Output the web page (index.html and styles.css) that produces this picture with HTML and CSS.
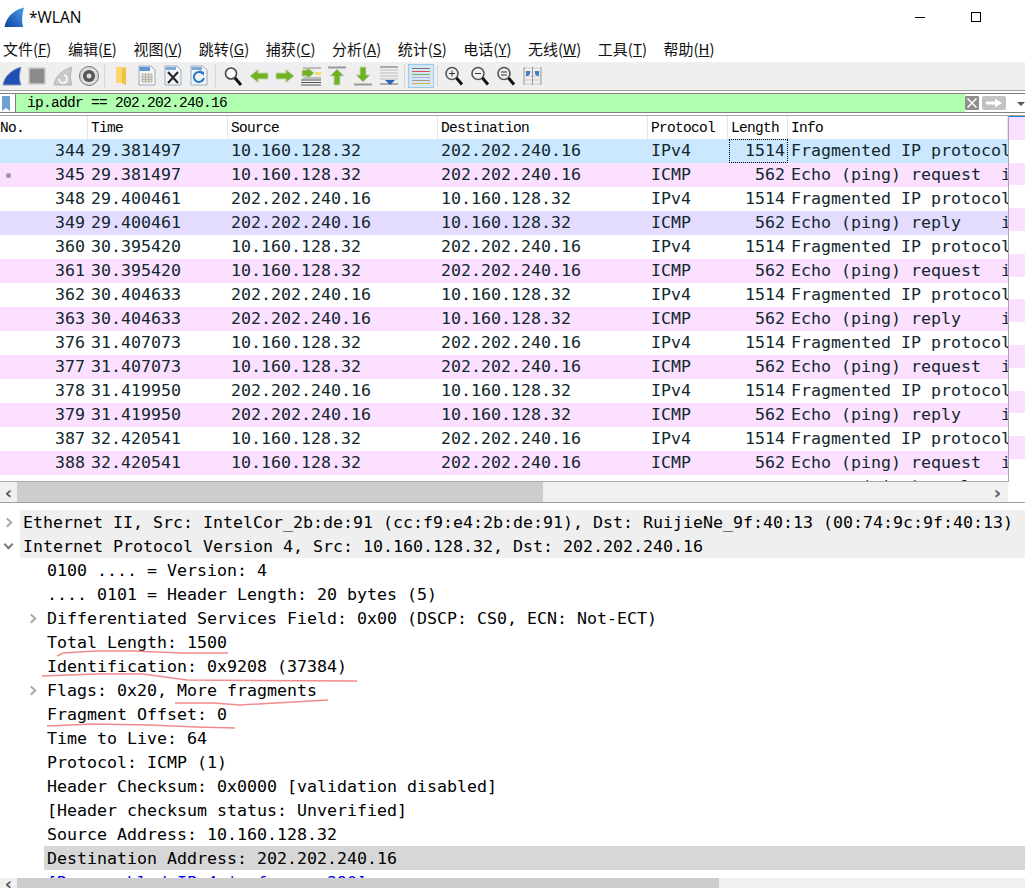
FILE: index.html
```html
<!DOCTYPE html>
<html lang="en">
<head>
    <meta charset="UTF-8">
    <title>*WLAN</title>
    <link rel="stylesheet" href="styles.css">
</head>
<body>
    <div class="titlebar">
        <svg class="app-icon" width="21" height="21" viewBox="0 0 21 21">
            <defs>
                <linearGradient id="fin" x1="0" y1="1" x2="1" y2="0">
                    <stop offset="0" stop-color="#0f3f9e"/>
                    <stop offset="1" stop-color="#4aa0ee"/>
                </linearGradient>
            </defs>
            <path d="M0.500 20C2 11 9 3 20 0.500C18 8 17.500 14 19 20Z" fill="url(#fin)"/>
        </svg>
        <span class="title">*WLAN</span>
        <div class="win-controls">
            <span class="win-min"></span>
            <span class="win-max"></span>
        </div>
    </div>

    <div class="menubar">
        <span>文件(<u>F</u>)</span>
        <span>编辑(<u>E</u>)</span>
        <span>视图(<u>V</u>)</span>
        <span>跳转(<u>G</u>)</span>
        <span>捕获(<u>C</u>)</span>
        <span>分析(<u>A</u>)</span>
        <span>统计(<u>S</u>)</span>
        <span>电话(<u>Y</u>)</span>
        <span>无线(<u>W</u>)</span>
        <span>工具(<u>T</u>)</span>
        <span>帮助(<u>H</u>)</span>
    </div>

    <div class="toolbar">
        <span class="tool first"><svg viewBox="0 0 22 22"><path d="M2 20C3 12 10 5 20 2C18 9 18 15 20 20Z" fill="#1d4fb4" stroke="#8a97b5"/></svg></span>
        <span class="tool"><svg viewBox="0 0 22 22"><rect x="3" y="3" width="16" height="16" fill="#8b8b8b" stroke="#cfcfcf" stroke-width="1.500"/></svg></span>
        <span class="tool"><svg viewBox="0 0 22 22"><path d="M2 20C3 12 10 5 20 2C18 9 18 15 20 20Z" fill="#c9c9c9" stroke="#b5b5b5"/><path d="M7 14a4 4 0 1 0 5-4" fill="none" stroke="#f4f4f4" stroke-width="2"/></svg></span>
        <span class="tool"><svg viewBox="0 0 22 22"><circle cx="11" cy="11" r="9.500" fill="#dcdcdc" stroke="#777"/><circle cx="11" cy="11" r="6" fill="#555"/><circle cx="11" cy="11" r="2.500" fill="#ddd"/></svg></span>
        <span class="sep"></span>
        <span class="tool"><svg viewBox="0 0 22 22"><path d="M6 2H16V20L12 18H6Z" fill="#fbd76e"/><path d="M12 3H16V20L12 18Z" fill="#f3c141"/></svg></span>
        <span class="tool"><svg viewBox="0 0 22 22"><path d="M3 1H15L19 5V20H3Z" fill="#f5f5f5" stroke="#9aa9bd"/><path d="M3.500 2H14V6H3.500Z" fill="#5b95d6"/><path d="M6 9H16V17H6ZM6 12H16M6 14.500H16M9.500 9V17M12.500 9V17" fill="#e3dfcf" stroke="#a5a296" stroke-width=".7"/></svg></span>
        <span class="tool"><svg viewBox="0 0 22 22"><path d="M3 1H15L19 5V20H3Z" fill="#f3f5f8" stroke="#9aa9bd"/><path d="M3.500 2H14V5H3.500Z" fill="#7fa9d8"/><path d="M6 7L16 18M16 7L6 18" stroke="#222" stroke-width="2"/></svg></span>
        <span class="tool"><svg viewBox="0 0 22 22"><path d="M3 1H15L19 5V20H3Z" fill="#f3f5f8" stroke="#9aa9bd"/><path d="M3.500 2H14V5H3.500Z" fill="#7fa9d8"/><path d="M14.500 8.500A5 5 0 1 0 15.800 13" fill="none" stroke="#2a78c8" stroke-width="2"/><path d="M11 5L16 7V11Z" fill="#2a78c8"/></svg></span>
        <span class="sep wide"></span>
        <span class="tool"><svg viewBox="0 0 22 22"><circle cx="9" cy="8.500" r="5.500" fill="#fff" stroke="#444" stroke-width="1.600"/><path d="M13 13L19 20" stroke="#111" stroke-width="3"/></svg></span>
        <span class="tool"><svg viewBox="0 0 22 22"><path d="M2 11L10 4.500V8H20V14H10V17.500Z" fill="#6fb320" stroke="#c6cfb8"/></svg></span>
        <span class="tool"><svg viewBox="0 0 22 22"><path d="M20 11L12 4.500V8H2V14H12V17.500Z" fill="#6fb320" stroke="#c6cfb8"/></svg></span>
        <span class="tool"><svg viewBox="0 0 22 22"><path d="M1 15H21M1 17.500H21M1 20H21" stroke="#555"/><path d="M15 7H21V10H15Z" fill="#f2df6b"/><path d="M3 3H21M3 13H21" stroke="#888"/><path d="M14 8L7 2V5H2V11H7V14Z" fill="#6fb320" stroke="#c6cfb8"/></svg></span>
        <span class="tool"><svg viewBox="0 0 22 22"><path d="M2 2.500H20" stroke="#999" stroke-width="2"/><path d="M11 4L18 11H14V20H8V11H4Z" fill="#6fb320" stroke="#c6cfb8"/></svg></span>
        <span class="tool"><svg viewBox="0 0 22 22"><path d="M2 19.500H20" stroke="#999" stroke-width="2"/><path d="M11 17L18 10H14V2H8V10H4Z" fill="#6fb320" stroke="#c6cfb8"/></svg></span>
        <span class="tool"><svg viewBox="0 0 22 22"><path d="M2 2H20" stroke="#666"/><path d="M2 5H20M2 8H20M2 11H20M2 14H20" stroke="#bbb"/><path d="M2 19H20" stroke="#666"/><path d="M7 15H17L12 20Z" fill="#2b63b5"/></svg></span>
        <span class="sep"></span>
        <span class="tool active"><svg viewBox="0 0 22 22"><path d="M2 3.500H20" stroke="#777"/><path d="M2 6.500H20" stroke="#d9534f"/><path d="M2 9.500H20" stroke="#6fb74f"/><path d="M2 12.500H20" stroke="#b8a9d6"/><path d="M2 15.500H20" stroke="#a89a8a"/><path d="M2 18.500H20" stroke="#d6b24f"/></svg></span>
        <span class="sep narrow"></span>
        <span class="tool"><svg viewBox="0 0 22 22"><circle cx="9" cy="8.500" r="6" fill="#f1f1f1" stroke="#555" stroke-width="1.600"/><path d="M6 8.500H12M9 5.500V11.500" stroke="#333"/><path d="M13.500 13L19 19.500" stroke="#111" stroke-width="3"/></svg></span>
        <span class="tool"><svg viewBox="0 0 22 22"><circle cx="9" cy="8.500" r="6" fill="#f1f1f1" stroke="#555" stroke-width="1.600"/><path d="M6 8.500H12" stroke="#333"/><path d="M13.500 13L19 19.500" stroke="#111" stroke-width="3"/></svg></span>
        <span class="tool"><svg viewBox="0 0 22 22"><circle cx="9" cy="8.500" r="6" fill="#f1f1f1" stroke="#555" stroke-width="1.600"/><path d="M6 7H12M6 10H12" stroke="#333"/><path d="M13.500 13L19 19.500" stroke="#111" stroke-width="3"/></svg></span>
        <span class="tool"><svg viewBox="0 0 22 22"><path d="M3 3H20M3 7H20M3 11H20M3 15H20M3 19H20" stroke="#ccc"/><path d="M3 2V20M11.500 2V20M20 2V20" stroke="#999"/><path d="M5 6H9V9L7 11H5ZM14 6H18V11H16L14 9Z" fill="#3f7fc2"/></svg></span>
    </div>

    <div class="filterbar">
        <span class="bookmark"><svg width="8" height="15" viewBox="0 0 8 15"><path d="M0 0H8V15L4 12L0 15Z" fill="#6f9fd4"/></svg></span>
        <span class="filter-text">ip.addr == 202.202.240.16</span>
        <span class="filter-clear"><svg width="14" height="14" viewBox="0 0 14 14"><rect width="14" height="14" rx="1" fill="#8e8e8e"/><path d="M2.500 2.500L11.500 11.500M11.500 2.500L2.500 11.500" stroke="#fff" stroke-width="1.500"/></svg></span>
        <span class="filter-apply"><svg width="24" height="14" viewBox="0 0 24 14"><rect width="24" height="14" rx="2" fill="#c2c2c2"/><path d="M4 5.500H13V2.500L20 7L13 11.500V8.500H4Z" fill="#fff"/></svg></span>
        <span class="filter-drop"></span>
    </div>

    <div class="packets">
        <div class="packet-table">
            <div class="row head">
                <span>No.</span><span>Time</span><span>Source</span><span>Destination</span><span>Protocol</span><span>Length</span><span>Info</span>
            </div>
            <div class="row selected"><span class="no">344</span><span>29.381497</span><span>10.160.128.32</span><span>202.202.240.16</span><span>IPv4</span><span class="len focus">1514</span><span>Fragmented IP protocol (proto=ICMP 1, off=0, ID=9208)</span></div>
            <div class="row icmp"><span class="no"><i class="dot"></i>345</span><span>29.381497</span><span>10.160.128.32</span><span>202.202.240.16</span><span>ICMP</span><span class="len">562</span><span>Echo (ping) request  id=0x0001, seq=1/256, ttl=64</span></div>
            <div class="row"><span class="no">348</span><span>29.400461</span><span>202.202.240.16</span><span>10.160.128.32</span><span>IPv4</span><span class="len">1514</span><span>Fragmented IP protocol (proto=ICMP 1, off=0, ID=3c8d)</span></div>
            <div class="row related"><span class="no">349</span><span>29.400461</span><span>202.202.240.16</span><span>10.160.128.32</span><span>ICMP</span><span class="len">562</span><span>Echo (ping) reply    id=0x0001, seq=1/256, ttl=52</span></div>
            <div class="row"><span class="no">360</span><span>30.395420</span><span>10.160.128.32</span><span>202.202.240.16</span><span>IPv4</span><span class="len">1514</span><span>Fragmented IP protocol (proto=ICMP 1, off=0, ID=9209)</span></div>
            <div class="row icmp"><span class="no">361</span><span>30.395420</span><span>10.160.128.32</span><span>202.202.240.16</span><span>ICMP</span><span class="len">562</span><span>Echo (ping) request  id=0x0001, seq=2/512, ttl=64</span></div>
            <div class="row"><span class="no">362</span><span>30.404633</span><span>202.202.240.16</span><span>10.160.128.32</span><span>IPv4</span><span class="len">1514</span><span>Fragmented IP protocol (proto=ICMP 1, off=0, ID=3c8e)</span></div>
            <div class="row icmp"><span class="no">363</span><span>30.404633</span><span>202.202.240.16</span><span>10.160.128.32</span><span>ICMP</span><span class="len">562</span><span>Echo (ping) reply    id=0x0001, seq=2/512, ttl=52</span></div>
            <div class="row"><span class="no">376</span><span>31.407073</span><span>10.160.128.32</span><span>202.202.240.16</span><span>IPv4</span><span class="len">1514</span><span>Fragmented IP protocol (proto=ICMP 1, off=0, ID=920a)</span></div>
            <div class="row icmp"><span class="no">377</span><span>31.407073</span><span>10.160.128.32</span><span>202.202.240.16</span><span>ICMP</span><span class="len">562</span><span>Echo (ping) request  id=0x0001, seq=3/768, ttl=64</span></div>
            <div class="row"><span class="no">378</span><span>31.419950</span><span>202.202.240.16</span><span>10.160.128.32</span><span>IPv4</span><span class="len">1514</span><span>Fragmented IP protocol (proto=ICMP 1, off=0, ID=3c8f)</span></div>
            <div class="row icmp"><span class="no">379</span><span>31.419950</span><span>202.202.240.16</span><span>10.160.128.32</span><span>ICMP</span><span class="len">562</span><span>Echo (ping) reply    id=0x0001, seq=3/768, ttl=52</span></div>
            <div class="row"><span class="no">387</span><span>32.420541</span><span>10.160.128.32</span><span>202.202.240.16</span><span>IPv4</span><span class="len">1514</span><span>Fragmented IP protocol (proto=ICMP 1, off=0, ID=920b)</span></div>
            <div class="row icmp"><span class="no">388</span><span>32.420541</span><span>10.160.128.32</span><span>202.202.240.16</span><span>ICMP</span><span class="len">562</span><span>Echo (ping) request  id=0x0001, seq=4/1024, ttl=64</span></div>
            <div class="row partial"><span class="no"></span><span></span><span></span><span></span><span></span><span class="len"></span><span>       (ping) reply    id=0x0001</span></div>
        </div>
        <div class="minimap"></div>
    </div>

    <div class="hscroll">
        <span class="sb-arrow">&#8249;</span>
        <span class="sb-thumb list-thumb"></span>
        <span class="sb-arrow right">&#8250;</span>
        <span class="sb-corner"></span>
    </div>
    <div class="splitter"></div>

    <div class="details">
        <div class="node top"><span class="twist closed"></span>Ethernet II, Src: IntelCor_2b:de:91 (cc:f9:e4:2b:de:91), Dst: RuijieNe_9f:40:13 (00:74:9c:9f:40:13)</div>
        <div class="node top"><span class="twist open"></span>Internet Protocol Version 4, Src: 10.160.128.32, Dst: 202.202.240.16</div>
        <div class="node child">0100 .... = Version: 4</div>
        <div class="node child">.... 0101 = Header Length: 20 bytes (5)</div>
        <div class="node child"><span class="twist closed"></span>Differentiated Services Field: 0x00 (DSCP: CS0, ECN: Not-ECT)</div>
        <div class="node child">Total Length: 1500</div>
        <div class="node child">Identification: 0x9208 (37384)</div>
        <div class="node child"><span class="twist closed"></span>Flags: 0x20, More fragments</div>
        <div class="node child">Fragment Offset: 0</div>
        <div class="node child">Time to Live: 64</div>
        <div class="node child">Protocol: ICMP (1)</div>
        <div class="node child">Header Checksum: 0x0000 [validation disabled]</div>
        <div class="node child">[Header checksum status: Unverified]</div>
        <div class="node child">Source Address: 10.160.128.32</div>
        <div class="node child picked">Destination Address: 202.202.240.16</div>
        <div class="node child link">[Reassembled IPv4 in frame: 390]</div>

        <svg class="ink" width="400" height="110" viewBox="0 640 400 110">
            <path d="M57 656L63 653L95 651L133 651L182 653L228 653"/>
            <path d="M42 676L97 674L143 674L187 680L357 681"/>
            <path d="M175 703L213 703L240 705L328 700"/>
            <path d="M47 726L93 724L150 725L197 727L235 728"/>
        </svg>
    </div>

    <div class="hscroll bottom">
        <span class="sb-arrow">&#8249;</span>
        <span class="sb-thumb tree-thumb"></span>
    </div>
</body>
</html>
```

FILE: styles.css
```css
body {
    margin: 0;
    height: 888px;
    overflow: hidden;
    background-color: #fff;
    color: #000;
    font-family: "Noto Sans", sans-serif;
}

.titlebar {
    display: flex;
    align-items: center;
    height: 40px;
    padding-left: 4px;
    box-sizing: border-box;
    padding-bottom: 6px;
}
.title {
    margin-left: 4px;
    font-size: 15.5px;
    font-family: "Open Sans", sans-serif;
}
.win-controls {
    display: flex;
    align-items: center;
    margin-left: auto;
    margin-right: 44px;
    gap: 46px;
}
.win-min {
    width: 10px;
    height: 1px;
    background-color: #000;
}
.win-max {
    width: 8px;
    height: 8px;
    border: 1px solid #000;
}

.menubar {
    display: flex;
    gap: 16.5px;
    height: 22px;
    padding-left: 3px;
    font-family: "Noto Sans CJK SC", sans-serif;
    font-size: 15px;
    line-height: 18px;
    color: #111;
}

.toolbar {
    display: flex;
    align-items: center;
    height: 28px;
    background-color: #efefef;
    border-bottom: 1px solid #a0a0a0;
}
.tool {
    display: flex;
    align-items: center;
    justify-content: center;
    width: 26px;
    height: 24px;
    box-sizing: border-box;
}
.tool svg {
    width: 22px;
    height: 22px;
}
.tool.first {
    width: 24px;
}
.tool.active {
    background-color: #d4e5f5;
    border: 1px solid #9cc8ee;
}
.sep {
    width: 1px;
    height: 22px;
    margin: 0 3px 0 2px;
    background-color: #d5d5d5;
}
.sep.wide {
    margin: 0 4px 0 3px;
}
.sep.narrow {
    margin: 0 3px;
}

.filterbar {
    display: flex;
    align-items: center;
    height: 20px;
    box-sizing: border-box;
    margin-top: 2px;
    border-top: 1px solid #7f7f7f;
    border-bottom: 1px solid #7f7f7f;
    background-color: #fff;
}
.bookmark {
    display: flex;
    align-items: center;
    width: 16px;
    padding-left: 2px;
    box-sizing: border-box;
    border-right: 1px solid #7f7f7f;
    height: 100%;
}
.filter-text {
    flex: 1;
    height: 100%;
    padding-left: 11px;
    background-color: #afffaf;
    font-family: "Liberation Mono", monospace;
    font-size: 14.5px;
    letter-spacing: -0.7px;
    line-height: 18px;
    white-space: pre;
}
.filter-clear {
    display: flex;
}
.filter-apply {
    display: flex;
    margin-left: 3px;
}
.filter-drop {
    width: 0;
    height: 0;
    margin: 1px 0 0 11px;
    border-left: 4px solid transparent;
    border-right: 4px solid transparent;
    border-top: 4px solid #555;
}

.packets {
    display: flex;
    height: 367px;
    margin-top: 2px;
    border-top: 1px solid #a8a8a8;
    box-sizing: border-box;
    background-color: #fff;
}
.packet-table {
    width: 1009px;
    height: 100%;
    overflow: hidden;
    flex-shrink: 0;
    border-right: 1px solid #a8a8a8;
    border-bottom: 1px solid #a8a8a8;
    box-sizing: border-box;
}
.minimap {
    flex: 1;
    height: 100%;
    border-top: 1.500px solid #1e78d8;
    box-sizing: border-box;
    background-image: repeating-linear-gradient(#fce0ff 0, #fce0ff 22.800px, #fff 22.800px, #fff 45.600px);
}

.row {
    display: grid;
    grid-template-columns: 88px 140px 210px 210px 80px 60px 220px;
    height: 24px;
    font-family: "DejaVu Sans Mono", monospace;
    font-size: 16.61px;
    line-height: 24px;
    color: #12272e;
    white-space: pre;
}
.row span {
    padding-left: 3px;
    overflow: hidden;
    box-sizing: border-box;
}
.row .no {
    position: relative;
    padding: 0 3px 0 0;
    text-align: right;
}
.row .len {
    padding: 0 3px 0 0;
    text-align: right;
}
.row .focus {
    margin-left: 1px;
    outline: 1px dotted #000;
    outline-offset: -1px;
}
.row.head {
    height: 23px;
    font-family: "Liberation Mono", monospace;
    font-size: 14.5px;
    letter-spacing: -0.7px;
    line-height: 25px;
    color: #000;
}
.row.head span {
    padding-left: 3px;
    border-right: 1px solid #e5e5e5;
}
.row.head span:first-child {
    padding-left: 0;
}
.row.selected {
    background-color: #cce8ff;
}
.row.icmp {
    background-color: #fce0ff;
}
.row.related {
    background-color: #e4dcff;
}
.row.partial {
    height: 6px;
    overflow: hidden;
}
.dot {
    position: absolute;
    left: 6px;
    top: 10px;
    width: 5px;
    height: 5px;
    border-radius: 50%;
    background-color: #999;
}

.hscroll {
    display: flex;
    align-items: center;
    height: 20px;
    background-color: #f0f0f0;
}
.sb-arrow {
    width: 17px;
    text-align: center;
    font-family: "DejaVu Sans", sans-serif;
    font-size: 18px;
    font-weight: bold;
    line-height: 17px;
    color: #555;
    flex-shrink: 0;
}
.sb-thumb {
    height: 100%;
    background-color: #cdcdcd;
}
.list-thumb {
    width: 526px;
}
.sb-arrow.right {
    margin-left: auto;
}
.sb-corner {
    align-self: stretch;
    width: 17px;
    margin-left: 2px;
    background-color: #fff;
}
.splitter {
    height: 8px;
    background-color: #fff;
    border-top: 1px solid #a0a0a0;
    box-sizing: border-box;
}

.details {
    position: relative;
    height: 368px;
    overflow: hidden;
    font-family: "DejaVu Sans Mono", monospace;
    font-size: 16.61px;
    color: #000;
}
.node {
    position: relative;
    height: 24px;
    line-height: 26px;
    white-space: pre;
}
.node.top {
    margin-left: 20px;
    padding-left: 3px;
    background-color: #efefef;
}
.node.child {
    margin-left: 44px;
    padding-left: 3px;
}
.node.picked {
    background-color: #d7d7d7;
}
.node.link {
    color: #0000ee;
}
.twist {
    position: absolute;
    left: -15px;
    top: 9px;
    width: 5px;
    height: 5px;
    border-right: 2px solid #aaa;
    border-bottom: 2px solid #aaa;
}
.twist.closed {
    transform: rotate(-45deg);
    left: -16px;
}
.twist.open {
    transform: rotate(45deg);
    top: 7px;
    border-color: #777;
}
.ink {
    position: absolute;
    left: 0;
    top: 130px;
    pointer-events: none;
}
.ink path {
    fill: none;
    stroke: #f28c8c;
    stroke-width: 1.500;
}

.hscroll.bottom {
    height: 10px;
    overflow: hidden;
}
.tree-thumb {
    width: 702px;
}
```
